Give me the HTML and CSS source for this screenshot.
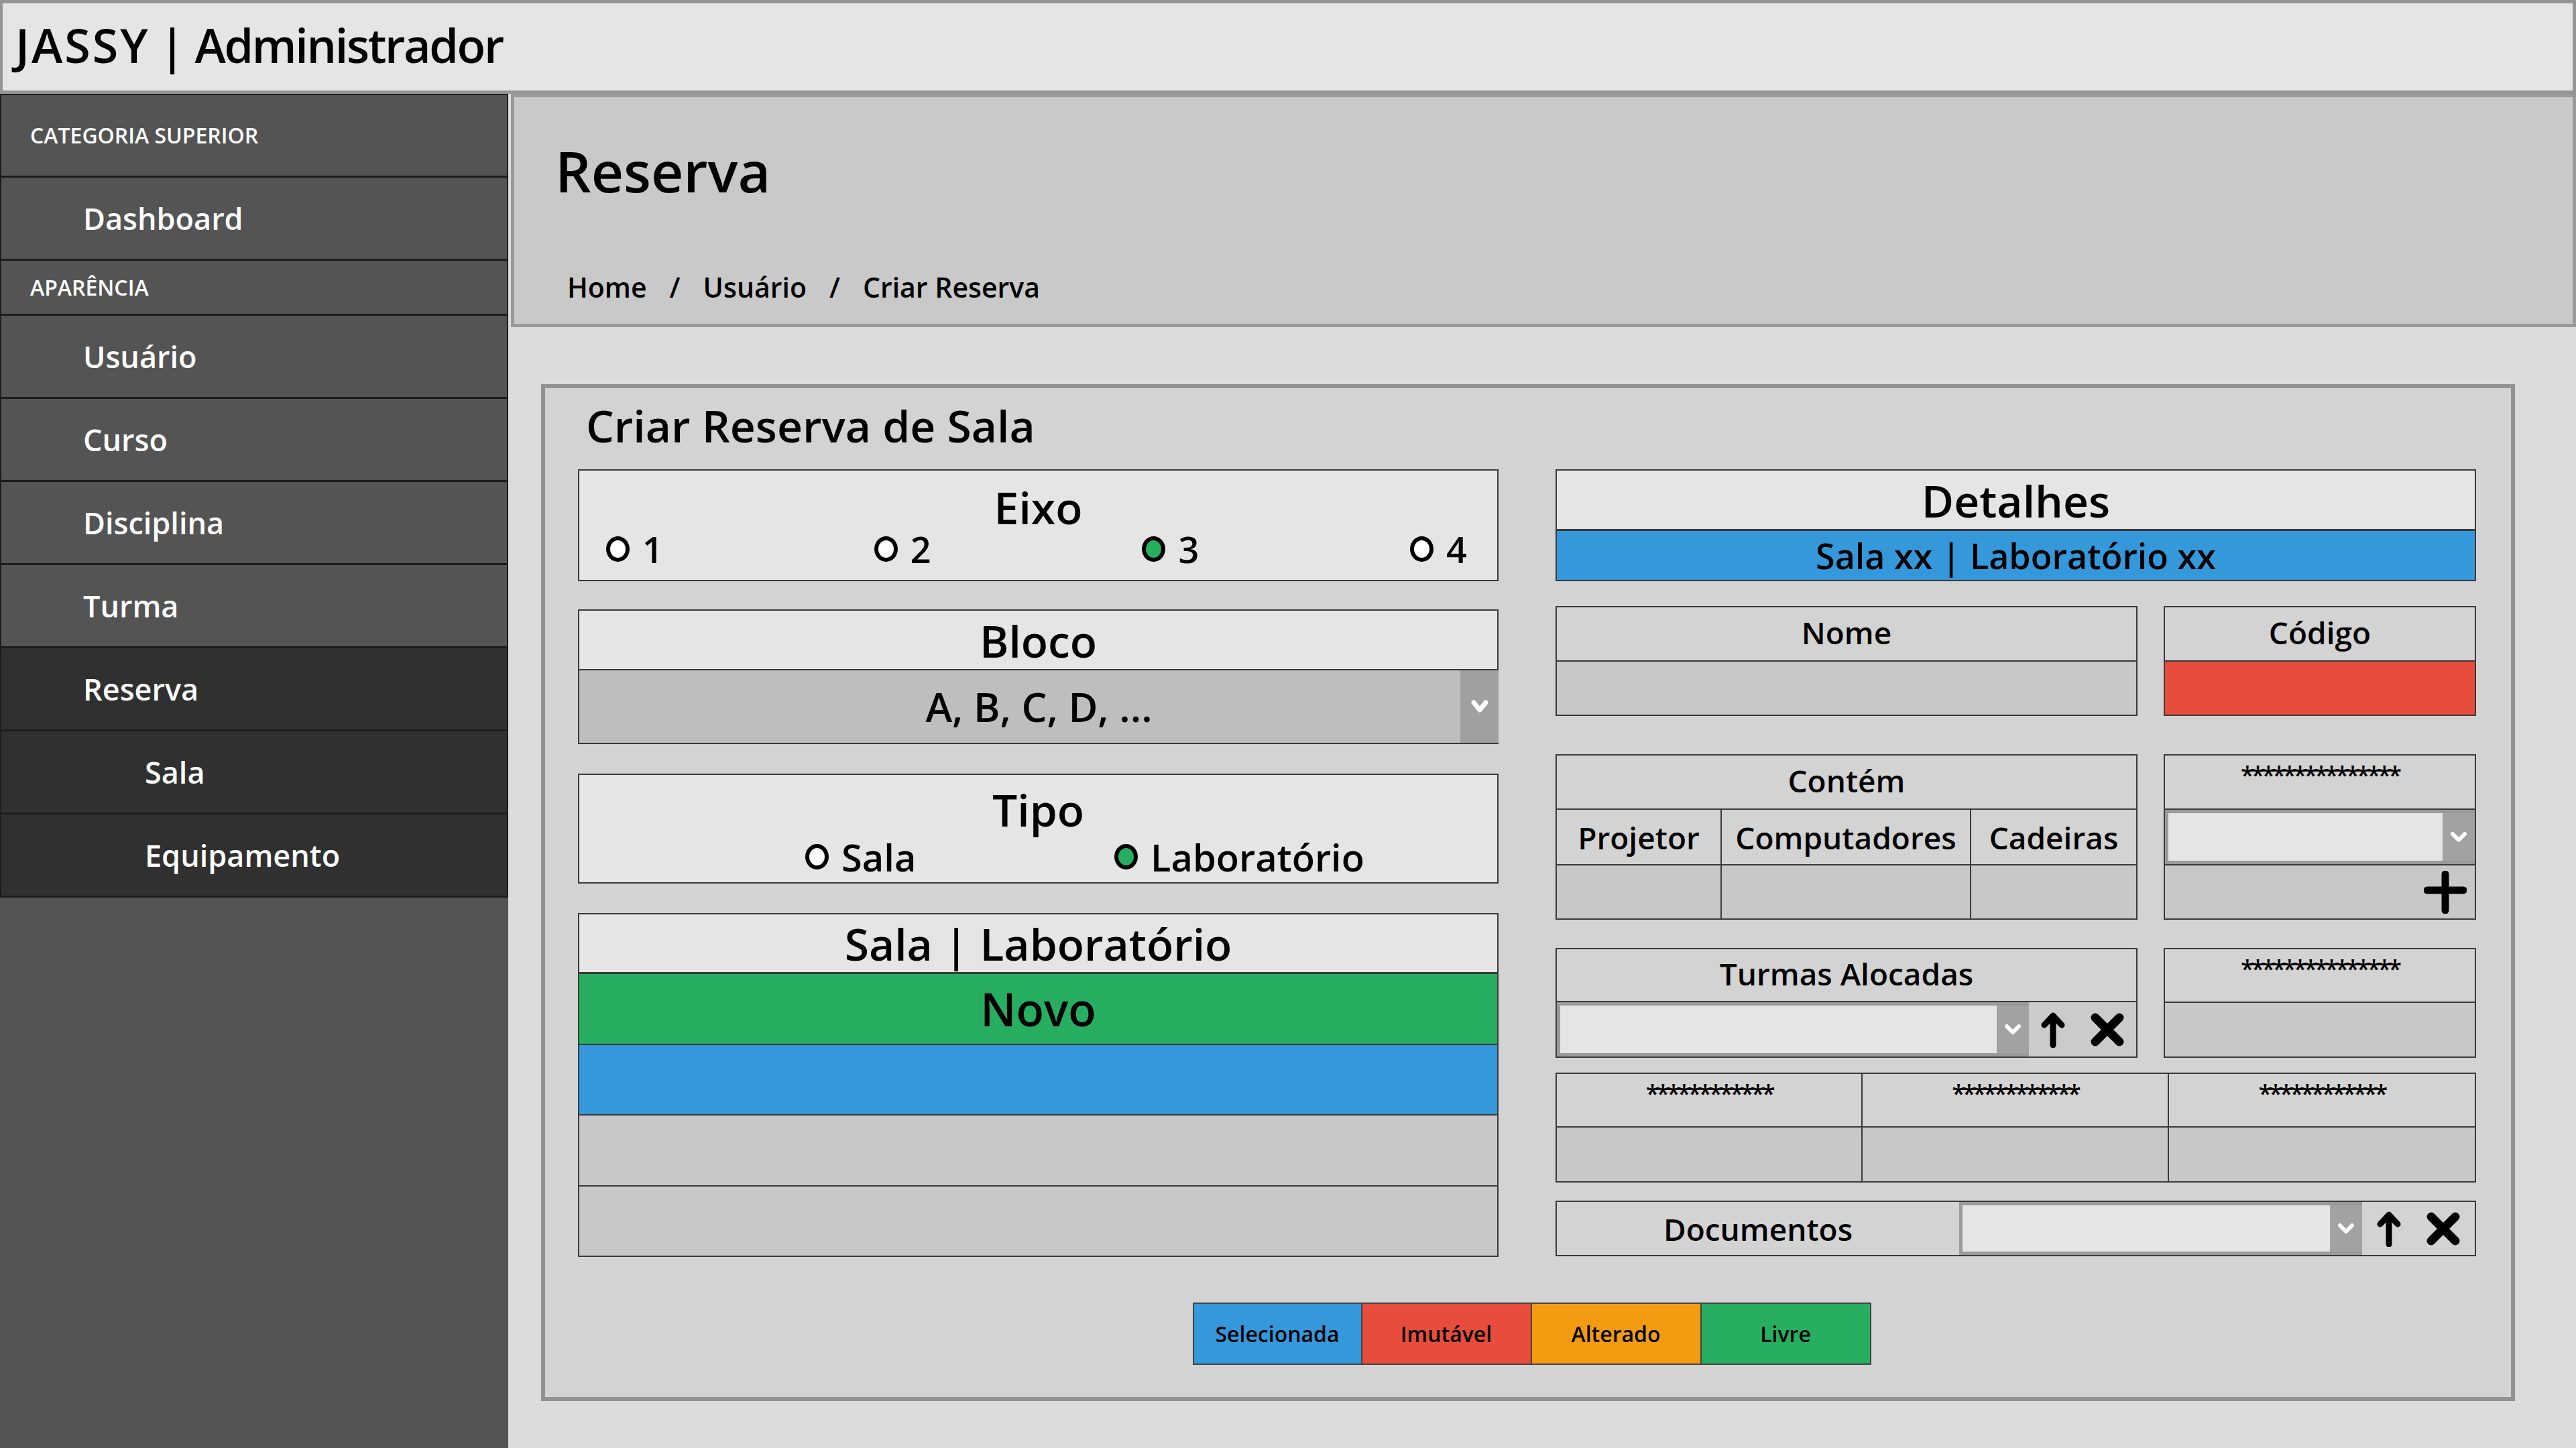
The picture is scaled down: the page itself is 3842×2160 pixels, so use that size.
FILE: index.html
```html
<!DOCTYPE html>
<html lang="pt-BR">
<head>
<meta charset="utf-8">
<title>JASSY | Administrador</title>
<link rel="stylesheet" href="styles.css">
</head>
<body>
<header class="topbar">
  <h1 class="brand"><span class="brand-mark">JASSY</span> | <span class="brand-role">Administrador</span></h1>
</header>
<div class="layout">
  <nav class="sidebar">
    <div class="nav-row nav-cat nav-first">CATEGORIA SUPERIOR</div>
    <div class="nav-row nav-item">Dashboard</div>
    <div class="nav-row nav-cat nav-cat-short">APARÊNCIA</div>
    <div class="nav-row nav-item">Usuário</div>
    <div class="nav-row nav-item">Curso</div>
    <div class="nav-row nav-item">Disciplina</div>
    <div class="nav-row nav-item">Turma</div>
    <div class="nav-row nav-item nav-active">Reserva</div>
    <div class="nav-row nav-item nav-active nav-sub">Sala</div>
    <div class="nav-row nav-item nav-active nav-sub">Equipamento</div>
  </nav>
  <main class="main">
    <section class="page-head">
      <h2 class="page-title">Reserva</h2>
      <div class="crumbs"><span>Home</span><span class="sep">/</span><span>Usuário</span><span class="sep">/</span><span>Criar Reserva</span></div>
    </section>
    <section class="card">
      <h3 class="card-title">Criar Reserva de Sala</h3>
      <div class="cols">
        <div class="col">
          <div class="box eixo">
            <div class="box-title">Eixo</div>
            <div class="radios radios-eixo">
              <span class="radio"><span class="dot"></span>1</span>
              <span class="radio"><span class="dot"></span>2</span>
              <span class="radio"><span class="dot dot-on"></span>3</span>
              <span class="radio"><span class="dot"></span>4</span>
            </div>
          </div>
          <div class="box bloco">
            <div class="head head-light head-big">Bloco</div>
            <div class="big-select">
              <span class="big-select-value">A, B, C, D, ...</span>
              <span class="big-select-btn"><svg class="chev-big" viewBox="0 0 28 22" width="28" height="22"><path d="M5 5 L14 16 L23 5" fill="none" stroke="#fff" stroke-width="7" stroke-linecap="round" stroke-linejoin="round"/></svg></span>
            </div>
          </div>
          <div class="box tipo">
            <div class="box-title">Tipo</div>
            <div class="radios radios-tipo">
              <span class="radio"><span class="dot"></span>Sala</span>
              <span class="radio"><span class="dot dot-on"></span>Laboratório</span>
            </div>
          </div>
          <div class="box list">
            <div class="head head-light head-big list-head">Sala | Laboratório</div>
            <div class="list-row row-green">Novo</div>
            <div class="list-row row-blue"></div>
            <div class="list-row"></div>
            <div class="list-row"></div>
          </div>
        </div>
        <div class="col">
          <div class="box detalhes">
            <div class="head head-light head-big">Detalhes</div>
            <div class="detalhes-sel">Sala xx | Laboratório xx</div>
          </div>
          <div class="pair pair-nome">
            <div class="box cell"><div class="head head-label">Nome</div><div class="val"></div></div>
            <div class="box cell"><div class="head head-label">Código</div><div class="val val-red"></div></div>
          </div>
          <div class="pair pair-contem">
            <div class="box cell">
              <div class="head head-label">Contém</div>
              <div class="sub-grid">
                <div class="sub-head">Projetor</div>
                <div class="sub-head">Computadores</div>
                <div class="sub-head">Cadeiras</div>
                <div class="sub-val"></div>
                <div class="sub-val"></div>
                <div class="sub-val"></div>
              </div>
            </div>
            <div class="box cell">
              <div class="head head-stars">***************</div>
              <div class="sel-row">
                <div class="sel">
                  <div class="sel-input"></div>
                  <div class="sel-btn"><svg viewBox="0 0 26 18" width="26" height="18"><path d="M4 4 L13 13 L22 4" fill="none" stroke="#fff" stroke-width="6" stroke-linecap="round" stroke-linejoin="round"/></svg></div>
                </div>
              </div>
              <div class="val val-plus"><svg viewBox="0 0 64 64" width="64" height="64"><path d="M32 5 V59 M5 29 H59" fill="none" stroke="#000" stroke-width="11" stroke-linecap="round"/></svg></div>
            </div>
          </div>
          <div class="pair pair-turmas">
            <div class="box cell">
              <div class="head head-label head-turmas">Turmas Alocadas</div>
              <div class="tr-row">
                <div class="sel sel-grow">
                  <div class="sel-input"></div>
                  <div class="sel-btn"><svg viewBox="0 0 26 18" width="26" height="18"><path d="M4 4 L13 13 L22 4" fill="none" stroke="#fff" stroke-width="6" stroke-linecap="round" stroke-linejoin="round"/></svg></div>
                </div>
                <div class="icons icons-turmas">
                  <svg viewBox="0 0 38 54" width="38" height="54"><path d="M19 50 V7 M6 20 L19 6 L32 20" fill="none" stroke="#000" stroke-width="9" stroke-linecap="round" stroke-linejoin="round"/></svg>
                  <svg viewBox="0 0 52 52" width="52" height="52"><path d="M8 8 L44 44 M44 8 L8 44" fill="none" stroke="#000" stroke-width="13" stroke-linecap="round"/></svg>
                </div>
              </div>
            </div>
            <div class="box cell">
              <div class="head head-stars head-turmas-r">***************</div>
              <div class="val"></div>
            </div>
          </div>
          <div class="box three">
            <div class="tcell"><div class="head head-stars head-three">************</div><div class="val"></div></div>
            <div class="tcell"><div class="head head-stars head-three">************</div><div class="val"></div></div>
            <div class="tcell"><div class="head head-stars head-three">************</div><div class="val"></div></div>
          </div>
          <div class="box docs">
            <div class="docs-label">Documentos</div>
            <div class="sel sel-grow">
              <div class="sel-input"></div>
              <div class="sel-btn"><svg viewBox="0 0 26 18" width="26" height="18"><path d="M4 4 L13 13 L22 4" fill="none" stroke="#fff" stroke-width="6" stroke-linecap="round" stroke-linejoin="round"/></svg></div>
            </div>
            <div class="icons icons-docs">
              <svg viewBox="0 0 38 54" width="38" height="54"><path d="M19 50 V7 M6 20 L19 6 L32 20" fill="none" stroke="#000" stroke-width="9" stroke-linecap="round" stroke-linejoin="round"/></svg>
              <svg viewBox="0 0 52 52" width="52" height="52"><path d="M8 8 L44 44 M44 8 L8 44" fill="none" stroke="#000" stroke-width="13" stroke-linecap="round"/></svg>
            </div>
          </div>
        </div>
      </div>
      <div class="legend">
        <div class="lg lg-blue">Selecionada</div>
        <div class="lg lg-red">Imutável</div>
        <div class="lg lg-orange">Alterado</div>
        <div class="lg lg-green">Livre</div>
      </div>
    </section>
  </main>
</div>
</body>
</html>
```

FILE: styles.css
```css
* { box-sizing: border-box; margin: 0; padding: 0; }
html, body { width: 3842px; height: 2160px; }
body {
  background: #dcdcdc;
  font-family: "Open Sans", "Noto Sans", "Liberation Sans", sans-serif;
  color: #000;
  overflow: hidden;
}

/* top bar */
.topbar {
  height: 140px;
  background: #e5e5e5;
  border: 5px solid #959595;
  border-left-width: 4px;
  display: flex;
  align-items: center;
  padding: 0 0 6px 19px;
}
.brand { font-size: 70px; line-height: 70px; font-weight: 600; word-spacing: -4px; }
.brand-mark { letter-spacing: 3px; }
.brand-role { letter-spacing: -2.3px; }

.layout { display: flex; height: 2020px; }

/* sidebar */
.sidebar {
  width: 758px;
  flex: none;
  background: #545454;
  display: flex;
  flex-direction: column;
}
.nav-row {
  flex: none;
  height: 124px;
  border: 2px solid #1c1c1c;
  border-top: 0;
  border-bottom-width: 3px;
  display: flex;
  align-items: center;
  color: #fff;
  font-weight: 600;
}
.nav-first { height: 125px; border-top: 2px solid #1c1c1c; }
.nav-cat { font-size: 32px; line-height: 32px; padding-left: 43px; }
.nav-cat-short { height: 82px; }
.nav-item { font-size: 45px; line-height: 45px; padding-left: 122px; }
.nav-active { background: #303030; }
.nav-sub { padding-left: 214px; }

/* main */
.main { flex: 1; display: flex; flex-direction: column; padding-left: 4px; }
.page-head {
  flex: none;
  height: 348px;
  background: #c9c9c9;
  border: 5px solid #999;
  padding: 68px 0 0 61px;
}
.page-title { font-size: 84px; line-height: 84px; font-weight: 600; }
.crumbs {
  display: flex;
  font-size: 41px;
  line-height: 41px;
  font-weight: 600;
  margin-top: 111px;
  padding-left: 18px;
}
.sep { margin: 0 34px; }

/* card */
.card {
  flex: none;
  height: 1517px;
  margin: 85px 91px 0 45px;
  background: #d3d3d3;
  border: 6px solid #929292;
  padding: 0 52px 0 49px;
  display: flex;
  flex-direction: column;
}
.card-title {
  font-size: 66px;
  line-height: 66px;
  font-weight: 600;
  margin: 22px 0 0 12px;
}
.cols {
  display: grid;
  grid-template-columns: 1373px 1373px;
  column-gap: 85px;
  margin-top: 33px;
  align-items: start;
}
.col { display: flex; flex-direction: column; }

.box { flex: none; border: 2px solid #3a3a3a; background: #e5e5e5; }
.box-title { font-size: 66px; line-height: 66px; font-weight: 600; text-align: center; }

/* radios */
.radios { display: flex; align-items: center; }
.radio {
  display: flex;
  align-items: center;
  gap: 19px;
  font-size: 54px;
  line-height: 54px;
  font-weight: 600;
}
.dot {
  width: 35px;
  height: 38px;
  border: 6px solid #000;
  border-radius: 50%;
  background: #fff;
}
.dot-on { background: #27ae60; }

.eixo { height: 167px; padding-top: 21px; }
.radios-eixo { justify-content: space-between; padding: 0 45px 0 40px; margin-top: 3px; }

.tipo { margin-top: 44px; height: 164px; padding-top: 18px; }
.radios-tipo { padding-left: 337px; margin-top: 11px; }
.radios-tipo .radio:first-child { width: 461px; }
.radios-tipo .radio { font-size: 56px; }

/* heads */
.head {
  flex: none;
  height: 81px;
  border-bottom: 2px solid #3a3a3a;
  display: flex;
  align-items: center;
  justify-content: center;
  font-size: 46px;
  line-height: 46px;
  font-weight: 600;
  background: #d3d3d3;
}
.head-light { background: #e5e5e5; }
.head-big { height: 89px; font-size: 66px; line-height: 66px; }
.head-label { padding-bottom: 6px; }
.head-stars {
  align-items: flex-start;
  font-size: 36px;
  line-height: 36px;
  letter-spacing: -4px;
  padding-top: 11px;
}

/* bloco */
.bloco { margin-top: 42px; height: 201px; display: flex; flex-direction: column; }
.big-select { flex: 1; display: flex; background: #bebebe; margin-right: -2px; }
.big-select-value {
  flex: 1;
  display: flex;
  align-items: center;
  justify-content: center;
  font-size: 60px;
  line-height: 60px;
  font-weight: 600;
  padding-left: 57px;
}
.big-select-btn {
  width: 57px;
  background: #a0a0a0;
  display: flex;
  align-items: center;
  justify-content: center;
}

/* list */
.list { margin-top: 44px; height: 513px; display: flex; flex-direction: column; }
.list-head { border-bottom-width: 3px; }
.list-row {
  flex: 1;
  border-bottom: 2px solid #3a3a3a;
  background: #c8c8c8;
  display: flex;
  align-items: center;
  justify-content: center;
  font-size: 68px;
  line-height: 68px;
  font-weight: 600;
}
.list-row:last-child { border-bottom: 0; }
.row-green { background: #27ae60; }
.row-blue { background: #3498db; }

/* right column */
.detalhes { height: 167px; display: flex; flex-direction: column; }
.detalhes .head { height: 90px; border-bottom-width: 3px; }
.detalhes-sel {
  flex: 1;
  background: #3498db;
  display: flex;
  align-items: center;
  justify-content: center;
  font-size: 52px;
  line-height: 52px;
  font-weight: 600;
}

.pair { display: grid; grid-template-columns: 868px 466px; column-gap: 39px; }
.cell { display: flex; flex-direction: column; background: #d3d3d3; }
.val { flex: 1; background: #c8c8c8; }
.val-red { background: #e74c3c; }

.pair-nome { margin-top: 37px; height: 164px; }

.pair-contem { margin-top: 57px; height: 247px; }
.sub-grid {
  flex: 1;
  display: grid;
  grid-template-columns: 246px 372px 1fr;
  grid-template-rows: 83px 1fr;
}
.sub-head {
  border-right: 2px solid #3a3a3a;
  border-bottom: 2px solid #3a3a3a;
  display: flex;
  align-items: center;
  justify-content: center;
  font-size: 46px;
  line-height: 46px;
  font-weight: 600;
}
.sub-val { border-right: 2px solid #3a3a3a; background: #c8c8c8; }
.sub-grid > :nth-child(3n) { border-right: 0; }

.sel-row { flex: none; height: 83px; border-bottom: 2px solid #3a3a3a; display: flex; }
.sel {
  display: flex;
  flex: 1;
  background: #9a9a9a;
  padding: 5px 0 5px 5px;
}
.sel-input { flex: 1; background: #e5e5e5; }
.sel-btn {
  width: 48px;
  background: #a2a2a2;
  display: flex;
  align-items: center;
  justify-content: center;
}
.val-plus {
  display: flex;
  align-items: center;
  justify-content: flex-end;
  padding-right: 12px;
}

.pair-turmas { margin-top: 42px; height: 164px; }
.head-turmas { height: 79px; }
.tr-row { flex: 1; display: flex; }
.icons {
  flex: none;
  display: flex;
  align-items: center;
  justify-content: center;
  gap: 36px;
}
.icons-turmas { width: 160px; background: #cbcbcb; }
.head-turmas-r { height: 80px; }

.three {
  margin-top: 22px;
  height: 164px;
  display: grid;
  grid-template-columns: 1fr 1fr 1fr;
  background: #d3d3d3;
}
.tcell { display: flex; flex-direction: column; border-right: 2px solid #3a3a3a; }
.tcell:last-child { border-right: 0; }
.head-three { height: 80px; }

.docs {
  margin-top: 27px;
  height: 83px;
  display: flex;
  background: #d3d3d3;
}
.docs-label {
  width: 600px;
  flex: none;
  display: flex;
  align-items: center;
  justify-content: center;
  font-size: 46px;
  line-height: 46px;
  font-weight: 600;
}
.icons-docs { width: 168px; }

/* legend */
.legend { display: flex; align-self: center; margin: 68px 0 0 14px; }
.lg {
  width: 253px;
  height: 93px;
  border: 2px solid #444;
  display: flex;
  align-items: center;
  justify-content: center;
  font-size: 32px;
  line-height: 32px;
  font-weight: 600;
}
.lg + .lg { border-left: 0; }
.lg-blue { background: #3498db; }
.lg-red { background: #e74c3c; }
.lg-orange { background: #f39c12; }
.lg-green { background: #27ae60; }
```
